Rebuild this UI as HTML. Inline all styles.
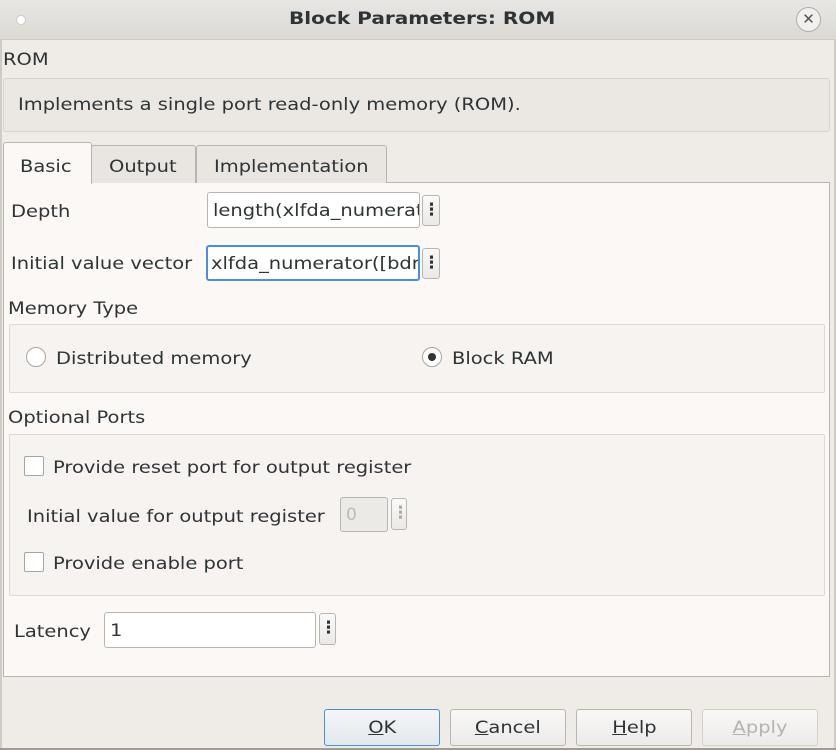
<!DOCTYPE html>
<html><head><style>
*{box-sizing:border-box;margin:0;padding:0}
body{width:836px;height:750px;overflow:hidden;background:#efebe7;font-family:"DejaVu Sans","Liberation Sans",sans-serif;font-size:17px;color:#2e3436;position:relative}
.a{position:absolute;white-space:nowrap}
.t{line-height:20px;transform:scaleX(1.145);transform-origin:0 0;margin-top:2px}
.s{display:inline-block;transform:scaleX(1.145);transform-origin:0 50%}
.inp{position:absolute;background:#fff;border:1px solid #b9b5b0;border-radius:3px;padding-left:5px;line-height:36px;overflow:hidden;white-space:nowrap}
.dot{position:absolute;background:linear-gradient(#fbfaf9,#ebe8e5);border:1px solid #b9b5b0;border-radius:3px;text-align:center;font-weight:bold;line-height:28px}
.btn{position:absolute;top:709px;height:37px;width:116px;border:1px solid #b9b5b0;border-radius:3px;background:linear-gradient(#f9f8f7,#ecebe9);text-align:center;line-height:37px}
.btn span{display:inline-block;transform:scaleX(1.145)}
.grp{position:absolute;border:1px solid #dcd8d4;background:#f6f3f0;border-radius:2px}
.rad{position:absolute;width:20px;height:20px;border:1px solid #a9a5a1;border-radius:50%;background:#fff}
.chk{position:absolute;width:20px;height:20px;border:1px solid #a9a5a1;border-radius:2px;background:#fff}
</style></head><body>
<div class="a" style="left:0;top:0;width:836px;height:40px;background:linear-gradient(#e8e6e3,#dcd9d5);border-bottom:1px solid #cfcbc7"></div>
<div class="a" style="left:16px;top:15px;width:10px;height:10px;border-radius:50%;background:#fff;border:1px solid #ccc"></div>
<div class="a" style="left:289px;top:9px;line-height:20px;font-weight:bold;transform:scaleX(1.18);transform-origin:0 0">Block Parameters: ROM</div>
<div class="a" style="left:796px;top:7px;width:25px;height:25px;border-radius:50%;border:1px solid #b0aca8;background:#f2f0ee;text-align:center;line-height:22px;font-size:15px;color:#555">✕</div>
<div class="a" style="left:0;top:40px;width:2px;height:710px;background:#cfcbc7"></div>
<div class="a" style="right:0;top:40px;width:2px;height:710px;background:#cfcbc7"></div>
<div class="a" style="left:0;top:748px;width:836px;height:2px;background:#9f9b97"></div>
<div class="a t" style="left:3px;top:48px">ROM</div>
<div class="a" style="left:3px;top:78px;width:827px;height:54px;background:#ebe7e3;border:1px solid #d6d2ce;border-radius:3px"></div>
<div class="a t" style="left:18px;top:93px">Implements a single port read-only memory (ROM).</div>
<div class="a" style="left:3px;top:182px;width:827px;height:495px;background:#fbf8f5;border:1px solid #b8b4b0"></div>
<div class="a" style="left:91px;top:145px;width:105px;height:38px;background:#e9e6e2;border:1px solid #b8b4b0;border-bottom:none;border-radius:3px 3px 0 0"></div>
<div class="a" style="left:196px;top:145px;width:191px;height:38px;background:#e9e6e2;border:1px solid #b8b4b0;border-bottom:none;border-radius:3px 3px 0 0"></div>
<div class="a" style="left:3px;top:142px;width:89px;height:42px;background:#fbf8f5;border:1px solid #b8b4b0;border-bottom:none;border-radius:3px 3px 0 0"></div>
<div class="a t" style="left:20px;top:155px">Basic</div>
<div class="a t" style="left:109px;top:155px">Output</div>
<div class="a t" style="left:214px;top:155px">Implementation</div>
<div class="a t" style="left:11px;top:200px">Depth</div>
<div class="inp" style="left:207px;top:192px;width:213px;height:36px"><span class="s">length(xlfda_numerator)</span></div>
<div class="dot" style="left:422px;top:195px;width:18px;height:31px">⋮</div>
<div class="a t" style="left:11px;top:252px">Initial value vector</div>
<div class="inp" style="left:206px;top:245px;width:214px;height:36px;border:2px solid #4a90d9;padding-left:3px;line-height:34px"><span class="s">xlfda_numerator([bdr])</span></div>
<div class="dot" style="left:422px;top:248px;width:18px;height:31px">⋮</div>
<div class="a t" style="left:8px;top:297px">Memory Type</div>
<div class="grp" style="left:9px;top:324px;width:816px;height:69px"></div>
<div class="rad" style="left:26px;top:347px"></div>
<div class="a t" style="left:56px;top:347px">Distributed memory</div>
<div class="rad" style="left:422px;top:347px"><div style="position:absolute;left:5px;top:5px;width:8px;height:8px;border-radius:50%;background:#2e3436"></div></div>
<div class="a t" style="left:452px;top:347px">Block RAM</div>
<div class="a t" style="left:8px;top:406px">Optional Ports</div>
<div class="grp" style="left:9px;top:434px;width:816px;height:162px"></div>
<div class="chk" style="left:24px;top:456px"></div>
<div class="a t" style="left:53px;top:456px">Provide reset port for output register</div>
<div class="a t" style="left:27px;top:505px">Initial value for output register</div>
<div class="inp" style="left:340px;top:497px;width:48px;height:35px;background:#eceae7;color:#bbb;line-height:35px">0</div>
<div class="dot" style="left:391px;top:498px;width:16px;height:32px;color:#aaa">⋮</div>
<div class="chk" style="left:24px;top:552px"></div>
<div class="a t" style="left:53px;top:552px">Provide enable port</div>
<div class="a t" style="left:14px;top:620px">Latency</div>
<div class="inp" style="left:104px;top:612px;width:212px;height:36px"><span class="s">1</span></div>
<div class="dot" style="left:319px;top:613px;width:17px;height:32px">⋮</div>
<div class="btn" style="left:324px;border-color:#4a90d9;background:linear-gradient(#f4f6f8,#e3e8ed)"><span><u>O</u>K</span></div>
<div class="btn" style="left:450px"><span><u>C</u>ancel</span></div>
<div class="btn" style="left:576px"><span><u>H</u>elp</span></div>
<div class="btn" style="left:702px;color:#b5b3b0;border-color:#d3d0cc"><span><u>A</u>pply</span></div>
</body></html>
